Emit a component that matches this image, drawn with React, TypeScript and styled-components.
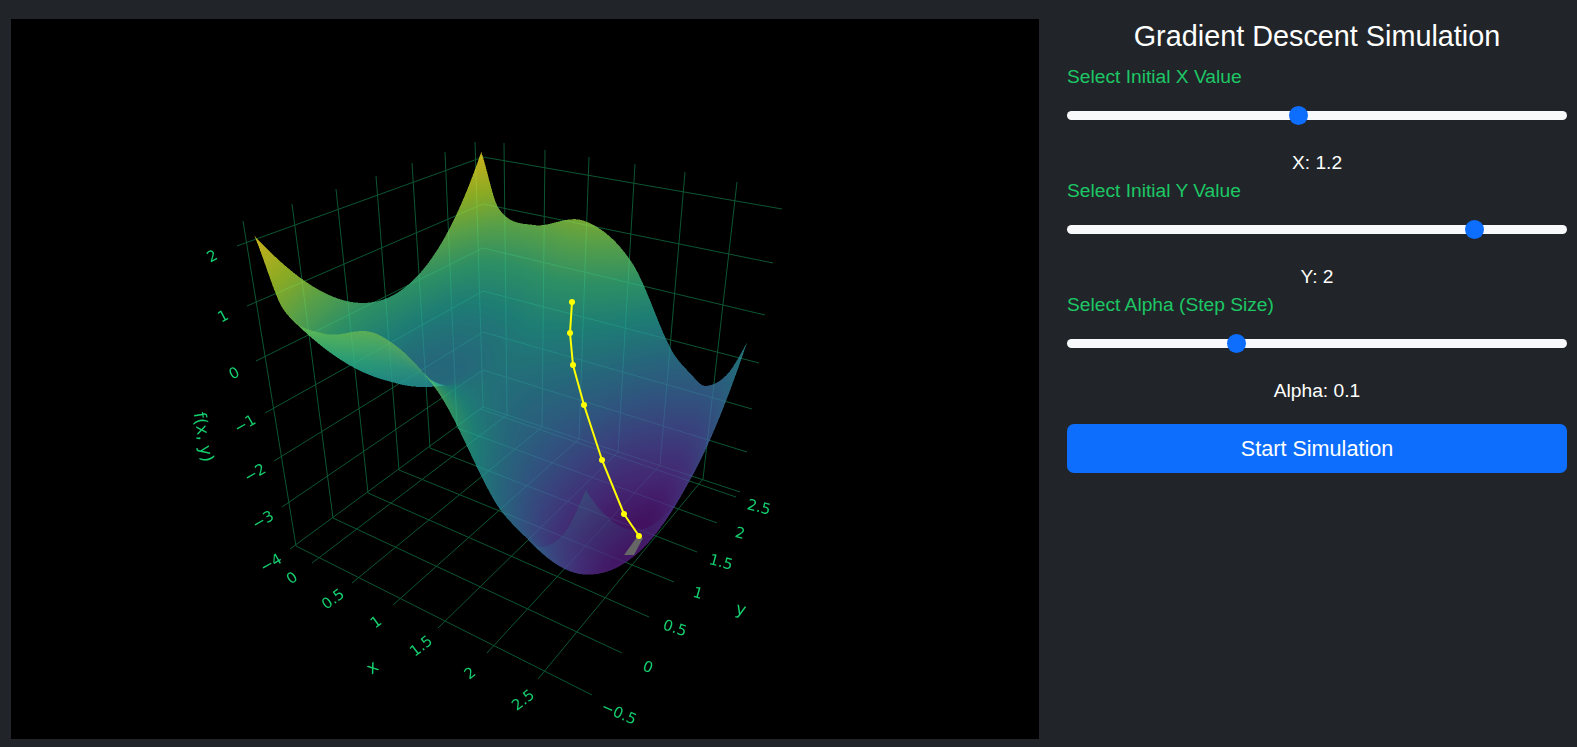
import React, { useLayoutEffect, useRef, useState } from "react";
import styled, { createGlobalStyle } from "styled-components";

const Global = createGlobalStyle`
  html, body { margin: 0; padding: 0; background: #212529; height: 100%; overflow: hidden; }
  body { font-family: "Liberation Sans", Arial, sans-serif; color: #fff; }
`;

const Page = styled.div`
  display: flex;
  height: 747px;
  padding: 19px 10px 8px 11px;
  box-sizing: border-box;
  gap: 28px;
`;

const Plot = styled.div`
  position: relative;
  flex: 0 0 1028px;
  height: 720px;
  background: #000;
  overflow: hidden;
`;

const SurfaceCanvas = styled.canvas`
  display: block;
  position: relative;
  width: 1028px;
  height: 720px;
`;

const GridLayer = styled.svg`
  position: absolute;
  inset: 0;
`;

const MarkLayer = styled.svg`
  position: absolute;
  inset: 0;
`;

const TickLabel = styled.text<{ $size: number }>`
  font-family: "DejaVu Sans", sans-serif;
  font-size: ${(p) => p.$size}px;
  fill: #14cf6e;
  text-anchor: middle;
  dominant-baseline: central;
`;

const Sidebar = styled.aside`
  flex: 1;
  min-width: 0;
  display: flex;
  flex-direction: column;
  margin-top: -19px;
`;

const Title = styled.h1`
  margin: 0;
  height: 63px;
  padding-top: 19px;
  box-sizing: border-box;
  font-size: 28.8px;
  line-height: 34px;
  font-weight: 400;
  text-align: center;
  color: #fff;
`;

const FieldLabel = styled.label`
  display: block;
  height: 27px;
  font-size: 19.2px;
  line-height: 27px;
  color: #1dc765;
`;

const Slider = styled.input`
  display: block;
  width: 100%;
  height: 28px;
  margin: 11.5px 0 19px;
  padding: 0;
  background: transparent;
  appearance: none;
  -webkit-appearance: none;
  &::-webkit-slider-runnable-track {
    height: 9.6px;
    border-radius: 5px;
    background: #f8f9fa;
  }
  &::-webkit-slider-thumb {
    -webkit-appearance: none;
    width: 19.2px;
    height: 19.2px;
    margin-top: -4.8px;
    border-radius: 50%;
    background: #0d6efd;
    border: 0;
  }
`;

const ValueText = styled.div`
  height: 27px;
  margin-bottom: 1.5px;
  font-size: 19.2px;
  line-height: 27px;
  text-align: center;
  color: #fff;
`;

const StartButton = styled.button`
  display: block;
  width: 100%;
  height: 49px;
  margin-top: 19px;
  border: 0;
  border-radius: 7px;
  background: #0d6efd;
  color: #fff;
  font-family: inherit;
  font-size: 21.6px;
`;

type P = [number, number];
type Seg = [number, number, number, number];

const L: P = [290, 549];
const B: P = [483, 407];
const R: P = [740, 492];
const F: P = [586, 704];
const TOPS: { p: P; u: number; v: number }[] = [
  { p: [237, 246], u: 0, v: 0 },
  { p: [483, 157], u: 0, v: 1 },
  { p: [782, 209], u: 1, v: 1 },
];
const XMIN = -0.27, XBOX = 3.0, YMIN = -0.55, YBOX = 2.55;
const SX0 = -0.22, SX1 = 2.85, SY0 = -0.44, SY1 = 2.55;

function solve3(m: number[][], r: number[]) {
  const a = m.map((row, i) => [...row, r[i]]);
  for (let i = 0; i < 3; i++) {
    let p = i;
    for (let k = i + 1; k < 3; k++) if (Math.abs(a[k][i]) > Math.abs(a[p][i])) p = k;
    [a[i], a[p]] = [a[p], a[i]];
    for (let k = 0; k < 3; k++) {
      if (k === i) continue;
      const f = a[k][i] / a[i][i];
      for (let j = i; j < 4; j++) a[k][j] -= f * a[i][j];
    }
  }
  return [a[0][3] / a[0][0], a[1][3] / a[1][1], a[2][3] / a[2][2]];
}

function makeProjection() {
  const [x0, y0] = L, [x1, y1] = F, [x2, y2] = R, [x3, y3] = B;
  const dx1 = x1 - x2, dx2 = x3 - x2, sx = x0 - x1 + x2 - x3;
  const dy1 = y1 - y2, dy2 = y3 - y2, sy = y0 - y1 + y2 - y3;
  const det = dx1 * dy2 - dx2 * dy1;
  const g = (sx * dy2 - dx2 * sy) / det, h = (dx1 * sy - sx * dy1) / det;
  const a = x1 - x0 + g * x1, b = x3 - x0 + h * x3, c = x0;
  const d = y1 - y0 + g * y1, e = y3 - y0 + h * y3, f = y0;
  const rows: number[][] = [];
  const rhs: number[] = [];
  for (const t of TOPS) {
    const X = a * t.u + b * t.v + c, Y = d * t.u + e * t.v + f, W = g * t.u + h * t.v + 1;
    rows.push([1, 0, -t.p[0]]); rhs.push(t.p[0] * W - X);
    rows.push([0, 1, -t.p[1]]); rhs.push(t.p[1] * W - Y);
  }
  const n: number[][] = [0, 1, 2].map((i) => [0, 1, 2].map((j) => rows.reduce((s, row) => s + row[i] * row[j], 0)));
  const nr = [0, 1, 2].map((i) => rows.reduce((s, row, k) => s + row[i] * rhs[k], 0));
  const [A, Bb, C] = solve3(n, nr);
  return (x: number, y: number, z: number) => {
    const u = (x - XMIN) / (XBOX - XMIN), v = (y - YMIN) / (YBOX - YMIN), w = (z + 4) / 6;
    const W = g * u + h * v + C * w + 1;
    return [(a * u + b * v + A * w + c) / W, (d * u + e * v + Bb * w + f) / W, W];
  };
}

const GK: P[] = [
  [-0.6, 1.6], [-0.22, 0.05], [0, -1.1], [0.45, -1.32], [1.05, -1.05], [1.6, -1.7],
  [2.1, -3.3], [2.35, -3.72], [2.5, -3.85], [2.7, -3.45], [2.85, -2.65], [3.3, 0.3],
];

function g(x: number) {
  let i = 0;
  while (i < GK.length - 2 && x > GK[i + 1][0]) i++;
  const p1 = GK[i], p2 = GK[i + 1];
  const p0 = GK[Math.max(i - 1, 0)], p3 = GK[Math.min(i + 2, GK.length - 1)];
  const dx = p2[0] - p1[0];
  const t = (x - p1[0]) / dx;
  const m1 = ((p2[1] - p0[1]) / (p2[0] - p0[0])) * dx;
  const m2 = ((p3[1] - p1[1]) / (p3[0] - p1[0])) * dx;
  const t2 = t * t, t3 = t2 * t;
  return (2 * t3 - 3 * t2 + 1) * p1[1] + (t3 - 2 * t2 + t) * m1 + (-2 * t3 + 3 * t2) * p2[1] + (t3 - t2) * m2;
}

const surface = (x: number, y: number) => {
  const cx = Math.max(0, (x - 1.3) / 1.55);
  const c = 1.05 + 0.068 * cx * cx;
  return 0.95 * (y - c) * (y - c) + g(x);
};

const VIRIDIS = [
  [68, 1, 84], [72, 40, 120], [62, 74, 137], [49, 104, 142], [38, 130, 142],
  [31, 158, 137], [53, 183, 121], [110, 206, 88], [181, 222, 43], [253, 231, 37],
];
const viridis = (t: number) => {
  const s = Math.min(Math.max(t, 0), 1) * (VIRIDIS.length - 1);
  const i = Math.min(Math.floor(s), VIRIDIS.length - 2);
  const f = s - i;
  return [0, 1, 2].map((k) => VIRIDIS[i][k] + (VIRIDIS[i + 1][k] - VIRIDIS[i][k]) * f);
};

const SS = 2;
const PW = 1028, PH = 720, OX = 11, OY = 19;
const FRONT = 0.76;
const LIFT = [14, 10, 26];
const ZLO = -3.9, ZHI = 2.05;

function paint(canvas: HTMLCanvasElement) {
  const w = PW * SS, h = PH * SS;
  canvas.width = w;
  canvas.height = h;
  const ctx = canvas.getContext("2d");
  if (!ctx) return;
  const img = ctx.createImageData(w, h);
  const d = img.data;
  const rgb = new Float32Array(w * h * 3);
  const clear = new Float32Array(w * h).fill(1);
  const project = makeProjection();
  const N = 120;
  const verts: { x: number; y: number; w: number; t: number }[] = [];
  for (let j = 0; j <= N; j++) {
    for (let i = 0; i <= N; i++) {
      const x = SX0 + ((SX1 - SX0) * i) / N, y = SY0 + ((SY1 - SY0) * j) / N;
      const z = surface(x, y);
      const p = project(x, y, z);
      verts.push({ x: (p[0] - OX) * SS, y: (p[1] - OY) * SS, w: p[2], t: (z - ZLO) / (ZHI - ZLO) });
    }
  }
  const quads: { a: number; b: number; c: number; e: number; k: number }[] = [];
  for (let j = 0; j < N; j++) {
    for (let i = 0; i < N; i++) {
      const a = j * (N + 1) + i, b = a + 1, c = a + N + 1, e = c + 1;
      quads.push({ a, b, c, e, k: verts[a].w + verts[b].w + verts[c].w + verts[e].w });
    }
  }
  quads.sort((p, q) => q.k - p.k);
  const tri = (A: number, Bi: number, C: number) => {
    const p = verts[A], q = verts[Bi], r = verts[C];
    const area = (q.x - p.x) * (r.y - p.y) - (q.y - p.y) * (r.x - p.x);
    if (area === 0) return;
    const isBack = area > 0;
    const ramp = Math.min(1, Math.max(0, (p.x / SS + OX - 400) / 160));
    const al = isBack ? 0.5 - 0.3 * ramp : FRONT;
    const x0 = Math.max(0, Math.floor(Math.min(p.x, q.x, r.x)));
    const x1 = Math.min(w - 1, Math.ceil(Math.max(p.x, q.x, r.x)));
    const y0 = Math.max(0, Math.floor(Math.min(p.y, q.y, r.y)));
    const y1 = Math.min(h - 1, Math.ceil(Math.max(p.y, q.y, r.y)));
    for (let y = y0; y <= y1; y++) {
      for (let x = x0; x <= x1; x++) {
        const px = x + 0.5, py = y + 0.5;
        const l0 = ((q.x - px) * (r.y - py) - (q.y - py) * (r.x - px)) / area;
        const l1 = ((r.x - px) * (p.y - py) - (r.y - py) * (p.x - px)) / area;
        const l2 = 1 - l0 - l1;
        if (l0 < 0 || l1 < 0 || l2 < 0) continue;
        const t = l0 * p.t + l1 * q.t + l2 * r.t;
        const col = viridis(t);
        const n = y * w + x;
        const lift = isBack ? 0 : Math.max(0, 1 - t);
        for (let k = 0; k < 3; k++) {
          rgb[n * 3 + k] = col[k] * al + rgb[n * 3 + k] * (1 - al) + LIFT[k] * lift;
        }
        clear[n] *= 1 - al;
      }
    }
  };
  for (const q of quads) {
    tri(q.a, q.b, q.e);
    tri(q.a, q.e, q.c);
  }
  for (let n = 0; n < w * h; n++) {
    const a = 1 - clear[n];
    if (a <= 0) continue;
    const o = n * 4;
    d[o] = rgb[n * 3] / a;
    d[o + 1] = rgb[n * 3 + 1] / a;
    d[o + 2] = rgb[n * 3 + 2] / a;
    d[o + 3] = a * 255;
  }
  ctx.putImageData(img, 0, 0);
}

const GRID: Seg[] = [
  [243, 221, 296, 546], [292, 204, 333, 518], [336, 189, 368, 493], [376, 176, 399, 470],
  [412, 163, 430, 448], [445, 152, 457, 428], [475, 142, 483, 407],
  [237, 246, 483, 157], [247, 306, 483, 204], [256, 361, 483, 248], [265, 413, 483, 291],
  [274, 461, 483, 332], [282, 507, 483, 370], [290, 549, 483, 407],
  [483, 157, 782, 209], [483, 204, 773, 263], [483, 248, 765, 315], [483, 291, 759, 363],
  [483, 332, 752, 409], [483, 370, 747, 452], [483, 407, 740, 492],
  [504, 143, 507, 415], [545, 150, 542, 427], [589, 157, 579, 439], [635, 164, 618, 452],
  [685, 172, 660, 465], [737, 182, 703, 479],
  [312, 563, 507, 415], [352, 583, 542, 427], [393, 605, 579, 439], [438, 628, 618, 452],
  [487, 653, 660, 465], [538, 679, 703, 479],
  [296, 546, 592, 695], [333, 518, 622, 653], [368, 493, 649, 617], [399, 470, 674, 582],
  [430, 448, 697, 552], [457, 428, 717, 523], [480, 409, 736, 497],
];

type Lab = { t: string; x: number; y: number; r: number; s?: number };
const LABELS: Lab[] = [
  { t: "2", x: 212, y: 256, r: -28 }, { t: "1", x: 223, y: 316, r: -28 }, { t: "0", x: 234, y: 373, r: -28 },
  { t: "−1", x: 245, y: 424, r: -30 }, { t: "−2", x: 255, y: 473, r: -30 }, { t: "−3", x: 263, y: 520, r: -30 },
  { t: "−4", x: 271, y: 563, r: -30 },
  { t: "0", x: 292, y: 578, r: -36 }, { t: "0.5", x: 333, y: 599, r: -36 }, { t: "1", x: 376, y: 622, r: -36 },
  { t: "1.5", x: 421, y: 646, r: -38 }, { t: "2", x: 470, y: 673, r: -38 }, { t: "2.5", x: 523, y: 700, r: -38 },
  { t: "−0.5", x: 619, y: 713, r: 24 }, { t: "0", x: 648, y: 667, r: 20 }, { t: "0.5", x: 675, y: 628, r: 18 },
  { t: "1", x: 698, y: 593, r: 16 }, { t: "1.5", x: 721, y: 562, r: 15 }, { t: "2", x: 740, y: 533, r: 14 },
  { t: "2.5", x: 759, y: 507, r: 14 },
  { t: "f(x, y)", x: 204, y: 437, r: 80, s: 17 }, { t: "x", x: 372, y: 667, r: -36, s: 17 }, { t: "y", x: 741, y: 609, r: 14, s: 17 },
];

const PATH: P[] = [[572, 302], [570, 333], [573, 365], [584, 405], [602, 460], [624, 514], [639, 536]];

function SurfacePlot() {
  const ref = useRef<HTMLCanvasElement>(null);
  useLayoutEffect(() => {
    if (ref.current) paint(ref.current);
  }, []);
  const vb = `${OX} ${OY} ${PW} ${PH}`;
  return (
    <Plot>
      <GridLayer width={PW} height={PH} viewBox={vb}>
        {GRID.map((s, i) => (
          <line key={i} x1={s[0]} y1={s[1]} x2={s[2]} y2={s[3]} stroke="#0c5633" strokeWidth={1} />
        ))}
      </GridLayer>
      <SurfaceCanvas ref={ref} />
      <MarkLayer width={PW} height={PH} viewBox={vb}>
        <polygon points="637,537 643,538 634,555 624,555" fill="#666" />
        <polyline points={PATH.map((p) => p.join(",")).join(" ")} fill="none" stroke="#ffff00" strokeWidth={2} />
        {PATH.map((p, i) => (
          <circle key={i} cx={p[0]} cy={p[1]} r={3} fill="#ffff00" />
        ))}
        {LABELS.map((l, i) => (
          <TickLabel key={i} $size={l.s ?? 15} x={l.x} y={l.y} transform={`rotate(${l.r} ${l.x} ${l.y})`}>
            {l.t}
          </TickLabel>
        ))}
      </MarkLayer>
    </Plot>
  );
}

export default function App() {
  const [x, setX] = useState(1.2);
  const [y, setY] = useState(2);
  const [alpha, setAlpha] = useState(0.1);
  return (
    <Page>
      <Global />
      <SurfacePlot />
      <Sidebar>
        <Title>Gradient Descent Simulation</Title>
        <FieldLabel htmlFor="x">Select Initial X Value</FieldLabel>
        <Slider id="x" type="range" min={0} max={2.6} step={0.1} value={x} onChange={(e) => setX(+e.target.value)} />
        <ValueText>X: {x}</ValueText>
        <FieldLabel htmlFor="y">Select Initial Y Value</FieldLabel>
        <Slider id="y" type="range" min={-0.4} max={2.5} step={0.1} value={y} onChange={(e) => setY(+e.target.value)} />
        <ValueText>Y: {y}</ValueText>
        <FieldLabel htmlFor="a">Select Alpha (Step Size)</FieldLabel>
        <Slider id="a" type="range" min={0} max={0.3} step={0.01} value={alpha} onChange={(e) => setAlpha(+e.target.value)} />
        <ValueText>Alpha: {alpha}</ValueText>
        <StartButton type="button">Start Simulation</StartButton>
      </Sidebar>
    </Page>
  );
}
